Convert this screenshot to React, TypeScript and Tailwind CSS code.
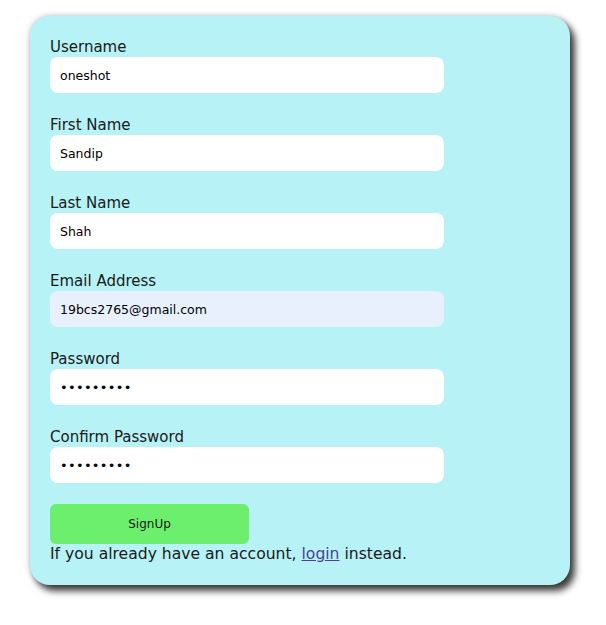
import React from 'react'

// Signup form card: stacked label + input groups, green submit, login hint.

const fields = [
  { label: 'Username', value: 'oneshot', type: 'text' },
  { label: 'First Name', value: 'Sandip', type: 'text' },
  { label: 'Last Name', value: 'Shah', type: 'text' },
  { label: 'Email Address', value: '19bcs2765@gmail.com', type: 'email', autofill: true },
  { label: 'Password', value: 'secret123', type: 'password' },
  { label: 'Confirm Password', value: 'secret123', type: 'password' },
]

export default function App() {
  return (
    <div className="min-h-[625px] bg-white pt-4 pl-[30px]" style={{ fontFamily: '"DejaVu Sans", sans-serif' }}>
      <form
        className="w-[540px] rounded-[20px] bg-[#b7f2f6] pt-[21px] pb-[21px] pl-5 text-[#1a1a1a] shadow-[5px_6px_7px_rgba(0,0,0,0.75),0_0_6px_rgba(0,0,0,0.25)]"
        onSubmit={(e) => e.preventDefault()}
      >
        {fields.map((f) => (
          <div key={f.label} className="mb-[22px]">
            <label className="block text-[15px] leading-5">{f.label}</label>
            <input
              type={f.type}
              defaultValue={f.value}
              readOnly
              className={`block h-9 w-[394px] rounded-lg px-[10px] text-black outline-none ${
                f.autofill ? 'bg-[#e8f0fe]' : 'bg-white'
              } ${f.type === 'password' ? 'text-[13px] tracking-[0.3px]' : 'text-[12.5px]'}`}
            />
          </div>
        ))}
        <button
          type="submit"
          className="-mt-px block h-10 w-[199px] rounded-md bg-[#6def6e] text-[12px] text-[#1a1a1a]"
        >
          SignUp
        </button>
        <p className="text-[15.6px] leading-5">
          If you already have an account,{' '}
          <a href="#" className="text-[#4b3f9c] underline">
            login
          </a>{' '}
          instead.
        </p>
      </form>
    </div>
  )
}
